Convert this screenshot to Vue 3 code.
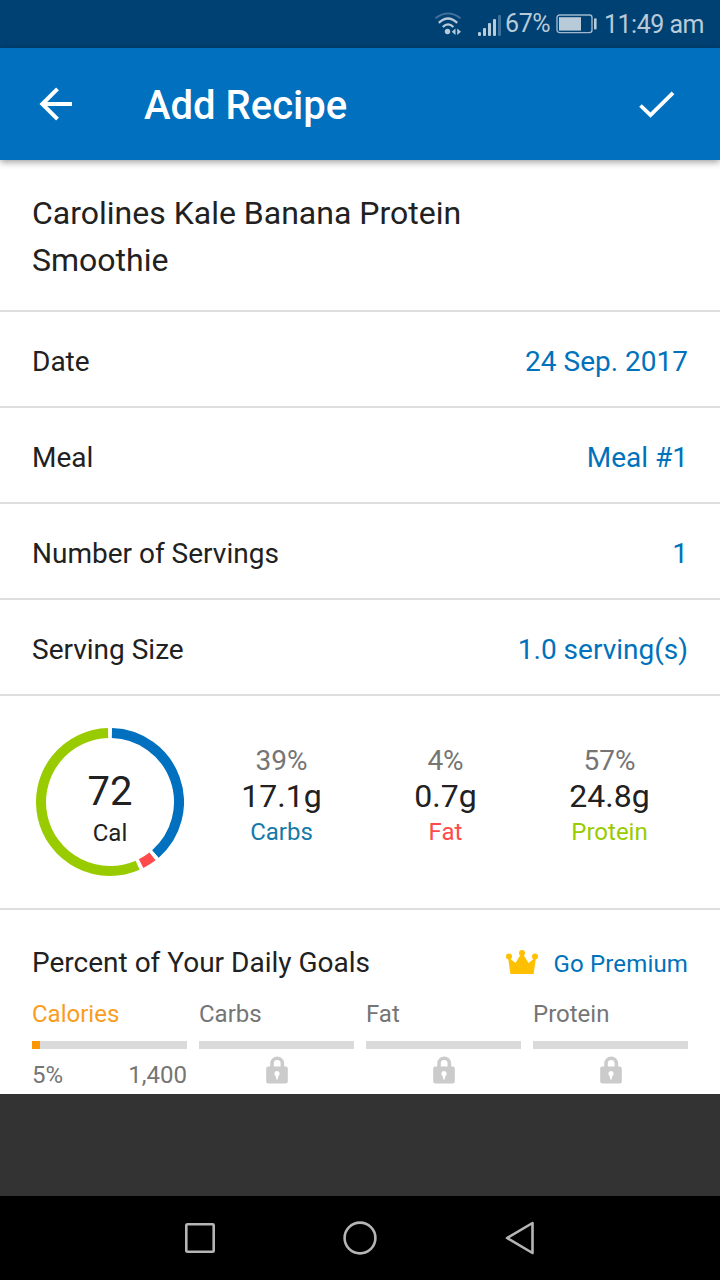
<template>
  <div class="screen">
    <div class="status-bar">
      <svg class="wifi" width="30" height="26" viewBox="0 0 30 26">
        <g fill="none" stroke-linecap="butt">
          <path d="M1.5 6.2Q14 -3.2 26.5 6.2" stroke="#41709a" stroke-width="2" />
          <path d="M4.8 10.8Q14 2.2 23.2 10.8" stroke="#b9cad8" stroke-width="2.3" />
          <path d="M8.8 15Q14 9.8 19.4 15" stroke="#b9cad8" stroke-width="2.3" />
        </g>
        <circle cx="13.5" cy="19.5" r="2.7" fill="#b9cad8" />
        <path d="M21.5 16.5V23L17.8 19.7ZM23.2 16.5V23L27 19.7Z" fill="#b9cad8" />
      </svg>
      <svg class="signal" width="24" height="24" viewBox="0 0 24 24">
        <g fill="#b9cad8">
          <rect x="0" y="18" width="3" height="4" rx="1.2" />
          <rect x="5" y="14" width="3" height="8" rx="1" />
          <rect x="10" y="9" width="3" height="13" rx="1" />
          <rect x="15" y="5" width="3" height="17" rx="1" />
        </g>
        <rect x="20" y="1" width="3" height="21" rx="1" fill="#41709a" />
      </svg>
      <span class="battery-text">67%</span>
      <svg class="battery" width="42" height="20" viewBox="0 0 42 20">
        <rect x="1" y="1" width="35" height="17.6" rx="2.5" fill="none" stroke="#9fb8cc" stroke-width="1.4" />
        <rect x="3" y="3.2" width="22" height="13.4" fill="#b9cad8" />
        <rect x="38" y="4.2" width="2.6" height="11.4" rx="1" fill="#b9cad8" />
      </svg>
      <span class="clock">11:49 am</span>
    </div>

    <header class="toolbar">
      <svg class="back" width="34" height="34" viewBox="0 0 34 34">
        <path d="M18.5 1.8L3.3 17L18.5 32.2M2.8 17H33" fill="none" stroke="#fff" stroke-width="4" />
      </svg>
      <h1>Add Recipe</h1>
      <svg class="check" width="36" height="28" viewBox="0 0 36 28">
        <path d="M1.5 14.5L11.5 24.2L34 1.8" fill="none" stroke="#fff" stroke-width="3.8" />
      </svg>
    </header>

    <main class="content">
      <div class="recipe-name">Carolines Kale Banana Protein<br />Smoothie</div>

      <div v-for="row in rows" :key="row.label" class="row">
        <span>{{ row.label }}</span>
        <span class="row-value">{{ row.value }}</span>
      </div>

      <section class="macros">
        <div class="ring">
          <svg width="148" height="148" viewBox="0 0 148 148">
            <path
              v-for="arc in arcs"
              :key="arc.color"
              :d="arc.d"
              :stroke="arc.color"
              fill="none"
              stroke-width="10"
            />
          </svg>
          <div class="ring-label">
            <span class="ring-value">72</span>
            <span class="ring-unit">Cal</span>
          </div>
        </div>
        <div class="macro-list">
          <div v-for="m in macros" :key="m.name" class="macro">
            <span class="macro-percent">{{ m.percent }}%</span>
            <span class="macro-grams">{{ m.grams }}</span>
            <span class="macro-name" :class="m.name.toLowerCase()">{{ m.name }}</span>
          </div>
        </div>
      </section>

      <section class="goals">
        <div class="goals-header">
          <h2>Percent of Your Daily Goals</h2>
          <a class="premium">
            <svg width="32" height="24" viewBox="0 0 32 24">
              <g fill="#fec001">
                <circle cx="3" cy="6.5" r="3" />
                <circle cx="16" cy="3" r="3" />
                <circle cx="29" cy="6.5" r="3" />
                <path d="M2 7L9.5 13L15 4H17L22.5 13L30 7L27.6 24H4.4Z" />
              </g>
            </svg>
            <span>Go Premium</span>
          </a>
        </div>
        <div class="goal-list">
          <div v-for="goal in goals" :key="goal.name" class="goal" :class="{ active: !goal.locked }">
            <span class="goal-name">{{ goal.name }}</span>
            <div class="track">
              <div class="fill" :style="{ width: goal.percent + '%' }"></div>
            </div>
            <div v-if="goal.locked" class="lock">
              <svg width="22" height="28" viewBox="0 0 22 28">
                <path d="M6 12V7.5a5.2 5.2 0 0 1 10.4 0V12" fill="none" stroke="#cbcbcb" stroke-width="3.6" />
                <rect x="0.2" y="10.5" width="21.6" height="17" rx="2" fill="#cbcbcb" />
                <path d="M11 15a2.7 2.7 0 0 1 1.4 5L11.6 23.5H10.4L9.6 20A2.7 2.7 0 0 1 11 15Z" fill="#fff" />
              </svg>
            </div>
            <div v-else class="goal-values">
              <span>{{ goal.percent }}%</span>
              <span>{{ goal.target }}</span>
            </div>
          </div>
        </div>
      </section>
    </main>

    <div class="ad-space"></div>

    <nav class="nav-bar">
      <svg width="34" height="34" viewBox="0 0 34 34">
        <rect x="3.3" y="3.3" width="27.4" height="27.4" rx="1" />
      </svg>
      <svg width="34" height="34" viewBox="0 0 34 34">
        <circle cx="17" cy="17" r="15.4" />
      </svg>
      <svg width="34" height="34" viewBox="0 0 34 34">
        <path d="M29.5 2L4 17L29.5 32Z" stroke-linejoin="round" />
      </svg>
    </nav>
  </div>
</template>

<script setup>
import { computed } from 'vue'

const rows = [
  { label: 'Date', value: '24 Sep. 2017' },
  { label: 'Meal', value: 'Meal #1' },
  { label: 'Number of Servings', value: '1' },
  { label: 'Serving Size', value: '1.0 serving(s)' }
]

const macros = [
  { name: 'Carbs', percent: 39, grams: '17.1g', color: '#0070bf' },
  { name: 'Fat', percent: 4, grams: '0.7g', color: '#ff4b4b' },
  { name: 'Protein', percent: 57, grams: '24.8g', color: '#99cc00' }
]

const goals = [
  { name: 'Calories', percent: 5, target: '1,400', locked: false },
  { name: 'Carbs', percent: 0, locked: true },
  { name: 'Fat', percent: 0, locked: true },
  { name: 'Protein', percent: 0, locked: true }
]

const point = (deg) => {
  const rad = (deg * Math.PI) / 180
  return `${74 + 69 * Math.sin(rad)} ${74 - 69 * Math.cos(rad)}`
}

// ring segments with a small gap between them
const arcs = computed(() => {
  let start = 0
  return macros.map((m) => {
    const end = start + m.percent * 3.6
    const large = end - start > 180 ? 1 : 0
    const d = `M${point(start + 1.6)} A69 69 0 ${large} 1 ${point(end - 1.6)}`
    start = end
    return { d, color: m.color }
  })
})
</script>

<style>
body {
  margin: 0;
}
</style>

<style scoped>
.screen {
  width: 720px;
  height: 1280px;
  display: flex;
  flex-direction: column;
  overflow: hidden;
  background: #fff;
  color: #212121;
  font-family: Roboto, "Liberation Sans", sans-serif;
}

.status-bar {
  height: 48px;
  flex-shrink: 0;
  box-sizing: border-box;
  padding-right: 16px;
  display: flex;
  align-items: center;
  justify-content: flex-end;
  background: #004173;
  color: #b9cad8;
}

.wifi {
  margin: 2px 14px 0 0;
}

.signal {
  margin: 3px 3px 0 0;
}

.battery-text {
  font-size: 25px;
  line-height: 48px;
  letter-spacing: -0.5px;
}

.battery {
  margin: 0 6px 0 6px;
}

.clock {
  font-size: 25px;
  line-height: 50px;
  letter-spacing: -0.5px;
  padding-top: 2px;
}

.toolbar {
  position: relative;
  height: 112px;
  flex-shrink: 0;
  box-sizing: border-box;
  padding: 0 45px 0 39px;
  display: flex;
  align-items: center;
  background: #0070bf;
  box-shadow: 0 2px 7px rgba(0, 0, 0, 0.4);
}

.check {
  margin-top: 2px;
}

h1 {
  flex: 1;
  margin: 3px 0 0 71px;
  color: #fff;
  font-size: 40px;
  font-weight: 500;
}

.content {
  height: 934px;
  flex-shrink: 0;
}

.recipe-name {
  height: 152px;
  box-sizing: border-box;
  padding: 30px 32px 0;
  border-bottom: 2px solid #dedede;
  font-size: 32px;
  line-height: 47px;
}

.row {
  height: 96px;
  box-sizing: border-box;
  padding: 4px 32px 0;
  display: flex;
  align-items: center;
  justify-content: space-between;
  border-bottom: 2px solid #dedede;
  font-size: 28px;
}

.row-value {
  color: #0072bc;
}

.macros {
  height: 214px;
  box-sizing: border-box;
  padding: 0 28px 0 36px;
  display: flex;
  align-items: center;
  border-bottom: 2px solid #dedede;
}

.ring {
  display: grid;
  width: 148px;
  height: 148px;
}

.ring svg,
.ring-label {
  grid-area: 1 / 1;
}

.ring-label {
  display: flex;
  flex-direction: column;
  align-items: center;
  padding-top: 40px;
}

.ring-value {
  font-size: 40px;
  line-height: 48px;
}

.ring-unit {
  font-size: 24px;
  line-height: 34px;
}

.macro-list {
  flex: 1;
  align-self: flex-start;
  margin: 47px 0 0 15.5px;
  display: grid;
  grid-template-columns: repeat(3, 164px);
}

.macro {
  display: flex;
  flex-direction: column;
  align-items: center;
}

.macro-percent {
  color: #757575;
  font-size: 28px;
  line-height: 35px;
}

.macro-grams {
  font-size: 32px;
  line-height: 36px;
}

.macro-name {
  font-size: 24px;
  line-height: 36px;
}

.carbs {
  color: #147aa8;
}

.fat {
  color: #ff4b4b;
}

.protein {
  color: #99cc00;
}

.goals {
  padding: 32px 32px 0;
}

.goals-header {
  height: 42px;
  display: flex;
  align-items: center;
  justify-content: space-between;
}

h2 {
  margin: 0 0 2px;
  font-size: 28px;
  font-weight: 400;
}

.premium {
  display: flex;
  align-items: center;
  gap: 16px;
  color: #0072bc;
  font-size: 24px;
  letter-spacing: 0.15px;
}

.premium svg {
  margin-bottom: 2px;
}

.premium span {
  padding-top: 2px;
}

.goal-list {
  margin-top: 12px;
  display: grid;
  grid-template-columns: repeat(4, 1fr);
  gap: 12px;
  color: #757575;
  font-size: 24px;
}

.goal-name {
  display: block;
  height: 45px;
  line-height: 36px;
}

.active .goal-name {
  color: #f99d1c;
}

.track {
  height: 8px;
  background: #dadada;
}

.fill {
  height: 8px;
  background: #ff9800;
}

.goal-values {
  margin-top: 8px;
  display: flex;
  justify-content: space-between;
  line-height: 36px;
}

.lock {
  margin-top: 7px;
  display: flex;
  justify-content: center;
}

.ad-space {
  height: 102px;
  flex-shrink: 0;
  background: #333;
}

.nav-bar {
  height: 84px;
  flex-shrink: 0;
  display: flex;
  align-items: center;
  justify-content: center;
  gap: 126px;
  background: #000;
}

.nav-bar svg {
  fill: none;
  stroke: #b5b5b5;
  stroke-width: 2.6;
}
</style>
